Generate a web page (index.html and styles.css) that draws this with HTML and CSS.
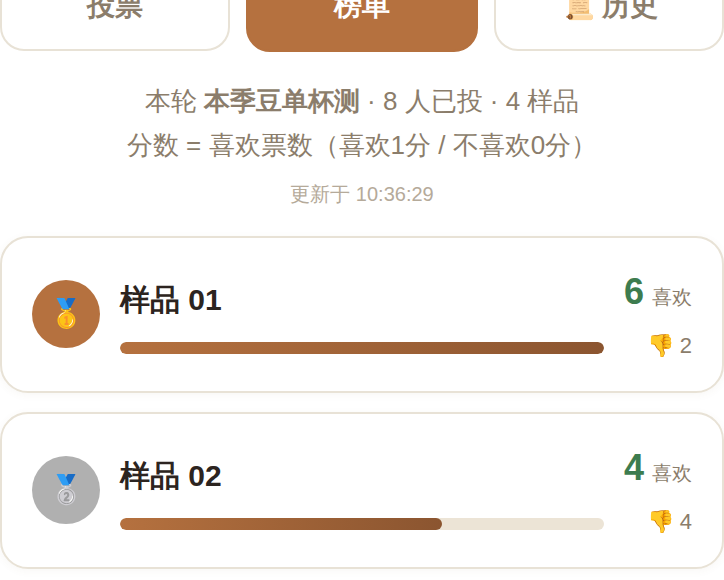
FILE: index.html
```html
<!DOCTYPE html>
<html>
<head>
  <meta charset="UTF-8">
  <meta name="viewport" content="width=device-width, initial-scale=1.0">
  <title>榜单</title>
  <link rel="stylesheet" href="styles.css">
</head>
<body>
<div class="page">
  <div class="tabs">
    <div class="tab">投票</div>
    <div class="tab active">榜单</div>
    <div class="tab">📜 历史</div>
  </div>

  <div class="meta">
    <div>本轮 <strong>本季豆单杯测</strong> · 8 人已投 · 4 样品</div>
    <div>分数 = 喜欢票数（喜欢1分 / 不喜欢0分）</div>
  </div>
  <div class="updated">更新于 10:36:29</div>

  <div class="card">
    <div class="rank gold">🥇</div>
    <div class="info">
      <div class="name">样品 01</div>
      <div class="bar"><div class="fill" style="width: 100%"></div></div>
    </div>
    <div class="score">
      <div class="likes"><span class="num">6</span><span class="label">喜欢</span></div>
      <div class="dislikes">👎 2</div>
    </div>
  </div>

  <div class="card">
    <div class="rank silver">🥈</div>
    <div class="info">
      <div class="name">样品 02</div>
      <div class="bar"><div class="fill" style="width: 66.6%"></div></div>
    </div>
    <div class="score">
      <div class="likes"><span class="num">4</span><span class="label">喜欢</span></div>
      <div class="dislikes">👎 4</div>
    </div>
  </div>
</div>
</body>
</html>
```

FILE: styles.css
```css
html, body {
  height: 100%;
  overflow: hidden;
}
body {
  margin: 0;
  background-color: #fff;
  color: #2c2420;
  font-family: "Liberation Sans", sans-serif;
}
.page {
  margin-top: -40px;
}
.tabs {
  display: grid;
  grid-template-columns: 1fr 232px 1fr;
  gap: 16px;
  align-items: start;
}
.tab {
  height: 91px;
  box-sizing: border-box;
  padding-top: 26px;
  background-color: #fff;
  border: 2px solid #e8e2d6;
  border-radius: 24px;
  color: #8b7d6b;
  font-size: 28px;
  font-weight: bold;
  line-height: 36px;
  text-align: center;
}
.tab.active {
  height: 92px;
  background-color: #b5713f;
  border-color: #b5713f;
  color: #fff;
}
.meta {
  margin-top: 27px;
  color: #8b7d6b;
  font-size: 26px;
  line-height: 44px;
  text-align: center;
}
.updated {
  margin-top: 11px;
  color: #b5aa9a;
  font-size: 20px;
  line-height: 32px;
  text-align: center;
}
.card {
  display: flex;
  align-items: center;
  gap: 20px;
  height: 157px;
  box-sizing: border-box;
  margin-top: 26px;
  padding: 0 30px;
  background-color: #fff;
  border: 2px solid #e8e2d6;
  border-radius: 28px;
  box-shadow: 0 2px 8px rgba(120, 90, 60, 0.05);
}
.card + .card {
  margin-top: 19px;
}
.rank {
  display: flex;
  align-items: center;
  justify-content: center;
  flex-shrink: 0;
  width: 68px;
  height: 68px;
  margin-top: -2px;
  border-radius: 50%;
  font-size: 28px;
}
.rank.gold {
  background-color: #b5713f;
}
.rank.silver {
  background-color: #b0b0b0;
}
.info {
  flex: 1;
  padding-top: 5px;
}
.name {
  font-size: 30px;
  font-weight: bold;
  line-height: 40px;
}
.bar {
  height: 12px;
  margin-top: 22px;
  background-color: #ece4d6;
  border-radius: 6px;
  overflow: hidden;
}
.fill {
  height: 100%;
  background: linear-gradient(90deg, #b5713f, #8b5530);
  border-radius: 6px;
}
.score {
  flex-shrink: 0;
  width: 68px;
  padding-top: 2px;
  text-align: right;
}
.likes {
  white-space: nowrap;
}
.num {
  color: #3d7c4f;
  font-size: 36px;
  font-weight: bold;
  line-height: 44px;
}
.label {
  margin-left: 8px;
  color: #8b7d6b;
  font-size: 20px;
}
.dislikes {
  margin-top: 16px;
  color: #8b7d6b;
  font-size: 22px;
  line-height: 32px;
  white-space: nowrap;
}
```
